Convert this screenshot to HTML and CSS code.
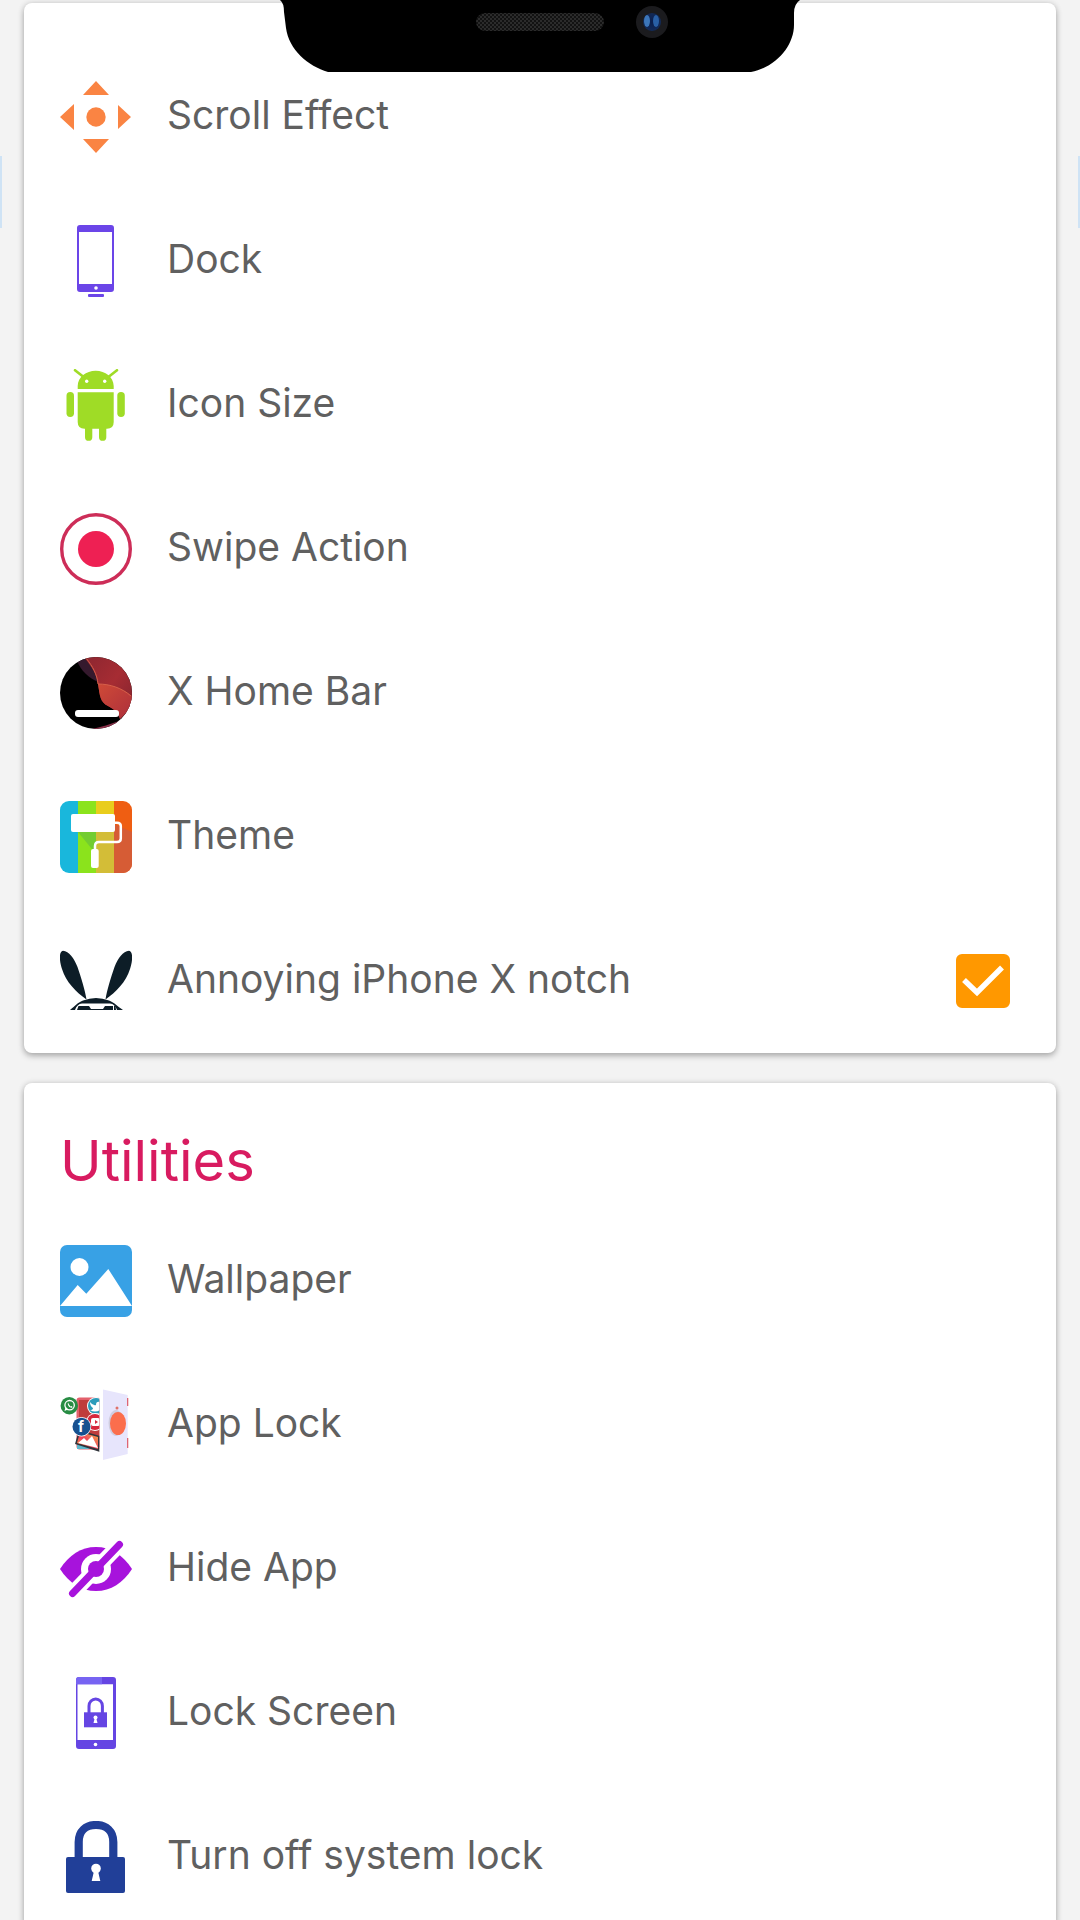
FILE: index.html
```html
<!DOCTYPE html>
<html lang="en">
<head>
<meta charset="utf-8">
<meta name="viewport" content="width=device-width, initial-scale=1">
<title>Launcher settings</title>
<link rel="stylesheet" href="styles.css">
</head>
<body>
<div class="notch" aria-hidden="true">
  <svg class="notch-art" viewBox="0 0 520 74">
    <defs>
      <pattern id="mesh" width="4" height="4" patternUnits="userSpaceOnUse">
        <rect width="4" height="4" fill="#121212"/>
        <rect width="2" height="2" fill="#2b2b2b"/>
        <rect x="2" y="2" width="2" height="2" fill="#2b2b2b"/>
      </pattern>
      <radialGradient id="lens">
        <stop offset="0" stop-color="#0b1f4e"/>
        <stop offset="1" stop-color="#122a58"/>
      </radialGradient>
    </defs>
    <path d="M0 0Q4 3 4 12L6 28C9 50 28 66 48 72H471C497 67 514 45 514 25V13Q514 4 520 0Z"/>
    <rect x="196" y="13" width="128" height="18" rx="9" fill="url(#mesh)"/>
    <circle cx="372" cy="22" r="16" fill="#1b1b1e"/>
    <circle cx="372" cy="22" r="9" fill="url(#lens)"/>
    <ellipse cx="367" cy="21" rx="3" ry="6" fill="#3c76ba"/>
    <ellipse cx="376" cy="21" rx="3" ry="6" fill="#2960a6"/>
  </svg>
</div>
<span class="edge edge-left" aria-hidden="true"></span>
<span class="edge edge-right" aria-hidden="true"></span>

<main class="screen">
  <section class="card card-first" aria-label="Home screen">
    <ul class="list">
      <li><button class="row" type="button">
        <svg class="icon" viewBox="0 0 72 72" fill="#fa8443" aria-hidden="true">
          <path d="M36 0L49 14H23ZM36 72L23 58H49ZM0 36L14 23V49ZM71 36L58 48V24Z"/>
          <circle cx="36" cy="36" r="9.7"/>
        </svg>
        <span class="label">Scroll Effect</span>
      </button></li>
      <li><button class="row" type="button">
        <svg class="icon" viewBox="0 0 72 72" fill="#6b45e8" aria-hidden="true">
          <path fill-rule="evenodd" d="M20 0H51Q54 0 54 3V64Q54 67 51 67H20Q17 67 17 64V3Q17 0 20 0ZM19 7V59H52V7Z"/>
          <circle cx="36" cy="63" r="1.8" fill="#fff"/>
          <rect x="28" y="69" width="16" height="3" rx="1"/>
        </svg>
        <span class="label">Dock</span>
      </button></li>
      <li><button class="row" type="button">
        <svg class="icon" viewBox="0 0 72 72" fill="#9fdc26" aria-hidden="true">
          <path d="M17.7 20V17C18 8 26 1.700 35.700 1.700S53.400 8 53.700 17V20ZM17.700 23.300H53.700V53Q53.700 59.700 47 59.700H46.300V68.200A3.600 3.600 0 0 1 39 68.200V59.700H32.300V68.200A3.600 3.600 0 0 1 25 68.200V59.700H24.500Q17.700 59.700 17.700 53Z"/>
          <rect x="6.500" y="23" width="7.500" height="25" rx="3.700"/>
          <rect x="57.300" y="23" width="7.500" height="25" rx="3.700"/>
          <path d="M15 1.200L23 7.500M57 1.200L49 7.500" stroke="#9fdc26" stroke-width="2.600" stroke-linecap="round"/>
          <circle cx="26.700" cy="12.300" r="1.700" fill="#fff"/>
          <circle cx="44.700" cy="12.300" r="1.700" fill="#fff"/>
        </svg>
        <span class="label">Icon Size</span>
      </button></li>
      <li><button class="row" type="button">
        <svg class="icon" viewBox="0 0 72 72" aria-hidden="true">
          <circle cx="36" cy="36" r="34.300" fill="none" stroke="#cd2d58" stroke-width="3.400"/>
          <circle cx="36" cy="36" r="18" fill="#ee2053"/>
        </svg>
        <span class="label">Swipe Action</span>
      </button></li>
      <li><button class="row" type="button">
        <svg class="icon" viewBox="0 0 72 72" aria-hidden="true">
          <defs>
            <clipPath id="disc"><circle cx="36" cy="36" r="36"/></clipPath>
            <linearGradient id="upper" x1="0" y1="0" x2="1" y2="1"><stop offset="0" stop-color="#8c2630"/><stop offset=".5" stop-color="#a62c33"/><stop offset="1" stop-color="#7d222e"/></linearGradient>
            <linearGradient id="lower" x1="0" y1="0" x2="1" y2="1"><stop offset="0" stop-color="#cf4a37"/><stop offset="1" stop-color="#ac2f3b"/></linearGradient>
          </defs>
          <g clip-path="url(#disc)">
            <rect width="72" height="72"/>
            <path d="M17 4C21 14 29 21 38 25L34 10L26 0Z" fill="#35192d"/>
            <path d="M24 0C30 8 36 15 38 27C40 39 40 45 48 49C54 52 58 56 60 62L72 50V0Z" fill="url(#upper)"/>
            <path d="M38 27C50 27 62 31 72 39V50L60 62C58 56 54 52 48 49C40 45 40 39 38 27Z" fill="url(#lower)"/>
            <path d="M26 1C33 10 37 17 38 27C50 27 62 31 71 39" fill="none" stroke="#d6604a" stroke-width="1"/>
            <path d="M32 72C42 70 50 67 59 64L54 72Z" fill="#8a3049"/>
          </g>
          <rect x="15" y="53" width="44" height="7" rx="3" fill="#fff"/>
        </svg>
        <span class="label">X Home Bar</span>
      </button></li>
      <li><button class="row" type="button">
        <svg class="icon" viewBox="0 0 72 72" aria-hidden="true">
          <defs><clipPath id="tile"><rect width="72" height="72" rx="9"/></clipPath></defs>
          <g clip-path="url(#tile)">
            <rect width="18" height="72" fill="#19b7dc"/>
            <rect x="18" width="18" height="72" fill="#8be31c"/>
            <rect x="36" width="18" height="72" fill="#e9cd1c"/>
            <rect x="54" width="18" height="72" fill="#ef5e12"/>
            <path d="M18 31H36V53Z" fill="#73cc31"/>
            <path d="M36 31H54V72H36Z" fill="#d3bd37"/>
            <path d="M54 23L72 31V72H54Z" fill="#d65c35"/>
          </g>
          <rect x="11" y="13" width="44" height="18" rx="2" fill="#fff"/>
          <path d="M55 21.700H57Q60.800 21.700 60.800 25V37.500Q60.800 41 57 41H39Q35 41 35 45V49" fill="none" stroke="#fff" stroke-width="2.500"/>
          <rect x="31" y="48" width="7.700" height="19" rx="2" fill="#fff"/>
        </svg>
        <span class="label">Theme</span>
      </button></li>
      <li><label class="row" for="notch-toggle">
        <svg class="icon" viewBox="0 0 72 72" fill="#0d1d27" aria-hidden="true">
          <path d="M3 5.700C9 6 14 13 17.500 22C21 32 25 45 26.500 54.500C16 47 6 37 2 24C0 18-2 7 3 5.700Z"/>
          <path d="M69 5.700C63 6 58 13 54.500 22C51 32 47 45 45.500 54.500C56 47 66 37 70 24C72 18 74 7 69 5.700Z"/>
          <path d="M10 65C15 61 17 58 23 55.500Q36 50.500 49 55.500C55 58 57 61 63 65Z"/>
          <path d="M15 65Q17 59 22 58.500H50Q55 59 57 65Z" fill="#fff"/>
          <path d="M17 65L18.500 61H20V65ZM54 65V61H55.500L56 65ZM20 61H29L31 64H43L45 61H53V65H20Z"/>
        </svg>
        <span class="label">Annoying iPhone X notch</span>
        <span class="check">
          <input class="check-input" id="notch-toggle" type="checkbox" checked>
          <svg class="check-mark" viewBox="0 0 54 54" aria-hidden="true"><path d="M8 26L21 38.500L46 13.500" fill="none" stroke="#fff" stroke-width="5.500"/></svg>
        </span>
      </label></li>
    </ul>
  </section>

  <section class="card" aria-labelledby="utilities">
    <h2 class="title" id="utilities">Utilities</h2>
    <ul class="list">
      <li><button class="row" type="button">
        <svg class="icon" viewBox="0 0 72 72" aria-hidden="true">
          <rect width="72" height="72" rx="7" fill="#38a1e5"/>
          <circle cx="19.500" cy="22" r="9" fill="#fff"/>
          <path d="M0 61L17.700 40L26.300 48.700L48.300 24L72 61Z" fill="#fff"/>
        </svg>
        <span class="label">Wallpaper</span>
      </button></li>
      <li><button class="row" type="button">
        <svg class="icon" viewBox="0 0 72 72" aria-hidden="true">
          <defs>
            <clipPath id="safe"><rect width="39.300" height="72"/></clipPath>
            <linearGradient id="photo" x1="0" y1="1" x2="1" y2="0"><stop offset="0" stop-color="#f9a13a"/><stop offset=".45" stop-color="#ef3f5c"/><stop offset="1" stop-color="#f4b347"/></linearGradient>
          </defs>
          <g clip-path="url(#safe)">
            <rect x="16.500" y="8.500" width="24" height="52" rx="3" fill="#e3606c"/>
            <rect x="19" y="11" width="22" height="47" fill="#bf3c3c"/>
            <rect x="17" y="56" width="12" height="4" fill="#5cb7cc"/>
            <circle cx="36" cy="17" r="9" fill="#fff"/>
            <circle cx="36" cy="17" r="8" fill="#2d9cba"/>
            <path d="M30 13Q33 17 36 16Q36 12 40 13V21Q35 24 30 21Q33 21 33 19Q30 17 30 13Z" fill="#fff"/>
            <circle cx="35" cy="33" r="9" fill="#fff"/>
            <circle cx="35" cy="33" r="8" fill="#d7273c"/>
            <rect x="31" y="29" width="9" height="8" rx="2" fill="#fff"/>
            <path d="M35 31L38 33L35 35Z" fill="#d7273c"/>
            <path d="M19 41L40 47V63L15 55Z" fill="#30343b"/>
            <path d="M20 43L38 48V60L17 54Z" fill="url(#photo)"/>
            <path d="M18 54L24 49L27 52L32 47L38 59Z" fill="#fff"/>
          </g>
          <circle cx="9.300" cy="16.700" r="8.700" fill="#278c43"/>
          <circle cx="9.600" cy="16.200" r="4.700" fill="none" stroke="#fff" stroke-width="1.300"/>
          <path d="M4.500 22L5.600 18L8 20.500ZM8 13.500C7 16.500 10 19.500 12.500 18.500L12 17L10.500 17.500L9 15.500Z" fill="#fff"/>
          <circle cx="21.500" cy="37.700" r="9.700" fill="#fff"/>
          <circle cx="21.500" cy="37.700" r="9" fill="#17508f"/>
          <text class="badge-letter" x="21" y="43" text-anchor="middle">f</text>
          <path d="M43 .5L67.700 6V65L43 71Z" fill="#e7e5fc"/>
          <path d="M67 9H68.300V17H67ZM67 49H68.300V59H67Z" fill="#dd6574"/>
          <ellipse cx="56" cy="34" rx="7.500" ry="13" fill="#cfcde0"/>
          <circle cx="57" cy="19" r="1.500" fill="#df7268"/>
          <ellipse cx="58" cy="34.500" rx="8" ry="11.500" fill="#fb6e4d"/>
        </svg>
        <span class="label">App Lock</span>
      </button></li>
      <li><button class="row" type="button">
        <svg class="icon" viewBox="0 0 72 72" aria-hidden="true">
          <path d="M0 36C9 22 21 14 36 14S63 22 72 36C63 50 51 58 36 58S9 50 0 36Z" fill="#a713dc"/>
          <path d="M60 11L12 61" stroke="#fff" stroke-width="15"/>
          <circle cx="36" cy="36" r="15" fill="#fff"/>
          <circle cx="36" cy="36" r="8" fill="#a713dc"/>
          <path d="M59.500 11.500L12.500 60.500" stroke="#a713dc" stroke-width="7" stroke-linecap="round"/>
        </svg>
        <span class="label">Hide App</span>
      </button></li>
      <li><button class="row" type="button">
        <svg class="icon" viewBox="0 0 72 72" fill="#6545e3" aria-hidden="true">
          <path fill-rule="evenodd" d="M19 0H53Q56 0 56 3V69Q56 72 53 72H19Q16 72 16 69V3Q16 0 19 0ZM17.500 7.300V63H53V7.300Z"/>
          <path d="M19 0H42V7.300H16V3Q16 0 19 0Z" fill="#7764f2"/>
          <circle cx="35.500" cy="67.500" r="1.800" fill="#fff"/>
          <rect x="24" y="35.300" width="23" height="15"/>
          <path d="M29 36V29A6.700 7 0 0 1 42.400 29V36" fill="none" stroke="#6545e3" stroke-width="3"/>
          <circle cx="35.500" cy="40.500" r="2" fill="#fff"/>
          <path d="M34.800 41H36.200L37.500 46H33.500Z" fill="#fff"/>
        </svg>
        <span class="label">Lock Screen</span>
      </button></li>
      <li><button class="row" type="button">
        <svg class="icon" viewBox="0 0 72 72" fill="#213f98" aria-hidden="true">
          <rect x="6" y="36" width="59" height="36" rx="2"/>
          <path d="M18.700 38V21C18.700 10 26 4 36 4S53.300 10 53.300 21V38" fill="none" stroke="#213f98" stroke-width="8.200"/>
          <circle cx="36" cy="47.500" r="4.800" fill="#fff"/>
          <path d="M34 50H38L40.300 60H31.700Z" fill="#fff"/>
        </svg>
        <span class="label">Turn off system lock</span>
      </button></li>
    </ul>
  </section>
</main>
</body>
</html>
```
FILE: styles.css
```css
* {
  box-sizing: border-box;
}

body {
  margin: 0;
  background: #f3f3f3;
  color: #606060;
  font-family: Inter, "Liberation Sans", sans-serif;
}

.screen {
  display: flex;
  flex-direction: column;
  gap: 30px;
  height: 100vh;
  padding: 3px 24px 30px;
  overflow-y: auto;
  scrollbar-width: none;
}

.card {
  flex: none;
  border-radius: 8px;
  background: #fff;
  box-shadow: 0 3px 6px rgba(0, 0, 0, .26), 0 0 6px rgba(0, 0, 0, .12);
}

.card-first {
  padding-top: 42px;
}

.title {
  margin: 0;
  padding: 46px 36px 16px;
  color: #d81b60;
  font-size: 56px;
  font-weight: 400;
  line-height: 64px;
}

.list {
  margin: 0;
  padding: 0;
  list-style: none;
}

.row {
  display: flex;
  align-items: center;
  gap: 35px;
  width: 100%;
  height: 144px;
  padding: 0 46px 0 36px;
  border: 0;
  background: none;
  color: inherit;
  font: inherit;
  text-align: left;
  cursor: pointer;
}

.icon {
  flex: none;
  width: 72px;
  height: 72px;
}

.label {
  flex: 1;
  padding-bottom: 4px;
  font-size: 39px;
  line-height: 48px;
}

.badge-letter {
  fill: #fff;
  font-size: 15px;
  font-weight: 700;
}

.check {
  display: grid;
  flex: none;
}

.check-input,
.check-mark {
  grid-area: 1 / 1;
  width: 54px;
  height: 54px;
}

.check-input {
  margin: 0;
  border: 5px solid #757575;
  border-radius: 6px;
  appearance: none;
}

.check-input:checked {
  border-color: #ff9800;
  background: #ff9800;
}

.check-mark {
  visibility: hidden;
  pointer-events: none;
}

.check-input:checked + .check-mark {
  visibility: visible;
}

.notch {
  position: absolute;
  top: 0;
  right: 0;
  left: 0;
  z-index: 2;
  display: flex;
  justify-content: center;
  pointer-events: none;
}

.notch-art {
  width: 520px;
  height: 74px;
}

.edge {
  position: absolute;
  top: 156px;
  width: 2px;
  height: 72px;
  background: #cfe3f5;
}

.edge-left {
  left: 0;
}

.edge-right {
  right: 0;
}
```
